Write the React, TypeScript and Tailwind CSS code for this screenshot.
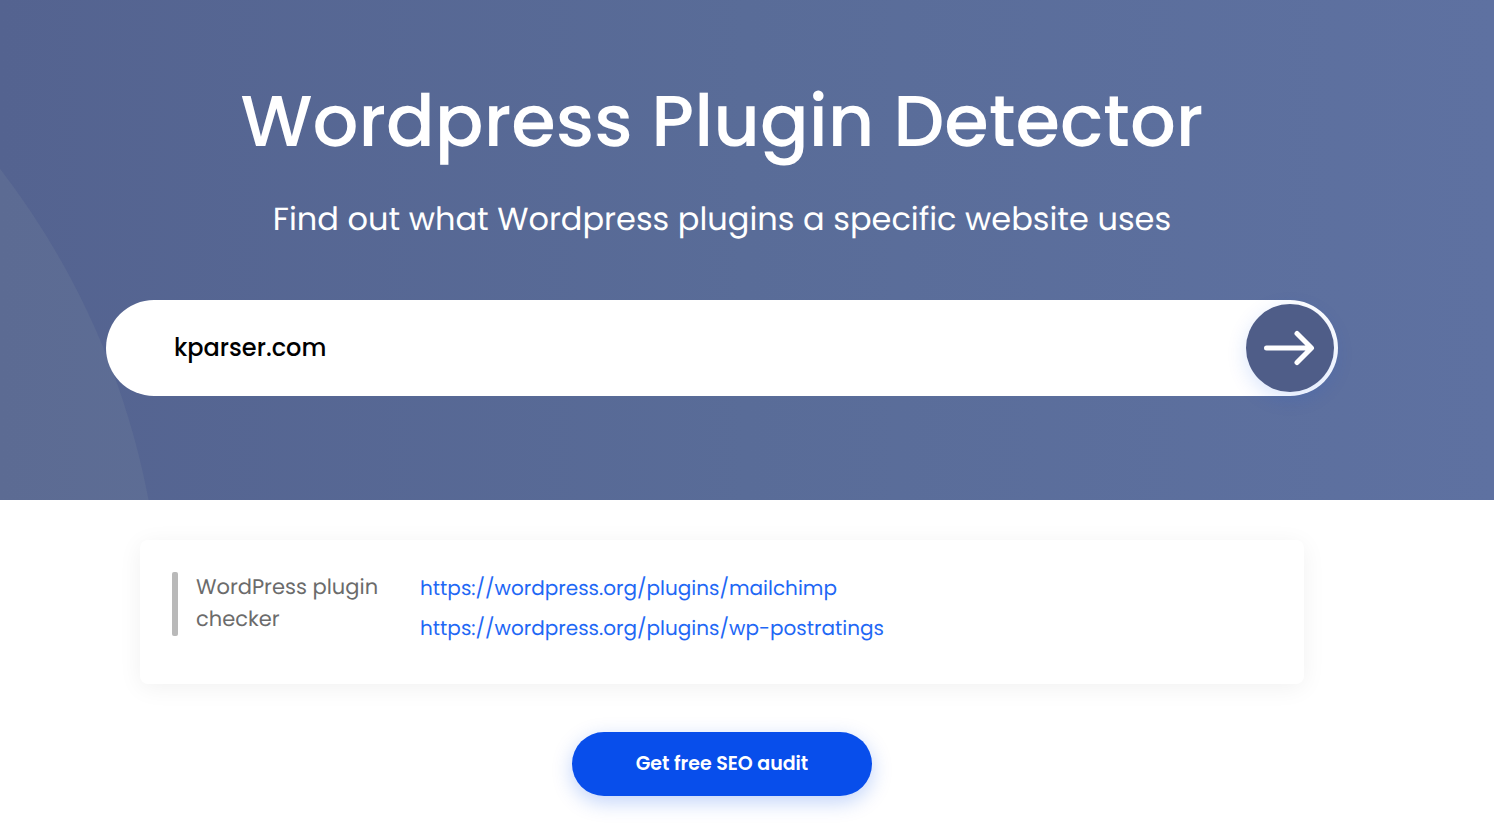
import { useState } from 'react';

const plugins = [
  'https://wordpress.org/plugins/mailchimp',
  'https://wordpress.org/plugins/wp-postratings',
];

function SearchForm() {
  const [website, setWebsite] = useState('kparser.com');

  return (
    <form
      onSubmit={(e) => e.preventDefault()}
      className="relative mx-auto flex h-24 w-full max-w-[1232px] items-center rounded-full bg-white p-1"
    >
      <input
        type="text"
        aria-label="Website"
        value={website}
        onChange={(e) => setWebsite(e.target.value)}
        className="h-full min-w-0 flex-1 bg-transparent pb-0.5 pl-16 text-2xl font-medium text-black outline-none"
      />
      <button
        type="submit"
        aria-label="Detect plugins"
        className="flex size-[88px] shrink-0 items-center justify-center rounded-full bg-[#4f5d88] text-white shadow-[0_6px_20px_rgba(8,78,235,0.15)]"
      >
        <svg
          className="h-10 w-14"
          fill="none"
          viewBox="0 0 56 40"
          stroke="currentColor"
          strokeWidth={5}
          strokeLinecap="round"
          strokeLinejoin="round"
        >
          <path d="M4.5 20h44.5M35 5.5L49.5 20 35 34.5" />
        </svg>
      </button>
    </form>
  );
}

export default function App() {
  return (
    <div className="min-h-screen bg-white font-[Poppins,Inter,sans-serif] [text-rendering:geometricPrecision]">
      <header className="relative overflow-hidden bg-linear-to-r from-[#546390] via-[#596c98] to-[#5e71a1] pt-[82px] pr-[50px] pb-[104px]">
        <div className="absolute -top-[134px] -left-[1394px] size-[1556px] rounded-full bg-[#c4c7c2]/8"></div>
        <div className="relative text-center text-white">
          <h1 className="text-7xl leading-20 font-medium">
            Wordpress Plugin Detector
          </h1>
          <p className="mt-8 mb-[54px] text-[32px] leading-[52px] font-normal">
            Find out what Wordpress plugins a specific website uses
          </p>
          <SearchForm />
        </div>
      </header>

      <main className="pt-10 pr-[50px] pb-8">
        <section className="mx-auto flex min-h-36 w-full max-w-[1164px] items-start rounded-lg bg-white p-8 shadow-[0_4px_24px_rgba(0,0,0,0.06)]">
          <div className="mr-[18px] h-16 w-1.5 shrink-0 rounded-xs bg-[#b9b9b9]"></div>
          <h2 className="w-56 shrink-0 pr-8 text-[21px] leading-8 font-normal text-[#6b6b6b]">
            WordPress plugin checker
          </h2>
          <ul className="min-w-0 space-y-2">
            {plugins.map((url) => (
              <li key={url}>
                <a
                  href={url}
                  className="block text-xl leading-8 text-[#1f68f5]"
                >
                  {url}
                </a>
              </li>
            ))}
          </ul>
        </section>

        <div className="mt-12 flex justify-center">
          <button
            type="button"
            className="h-16 w-[300px] rounded-full bg-[#084eeb] text-[19px] font-semibold text-white shadow-[0_6px_20px_rgba(8,78,235,0.25)]"
          >
            Get free SEO audit
          </button>
        </div>
      </main>
    </div>
  );
}
